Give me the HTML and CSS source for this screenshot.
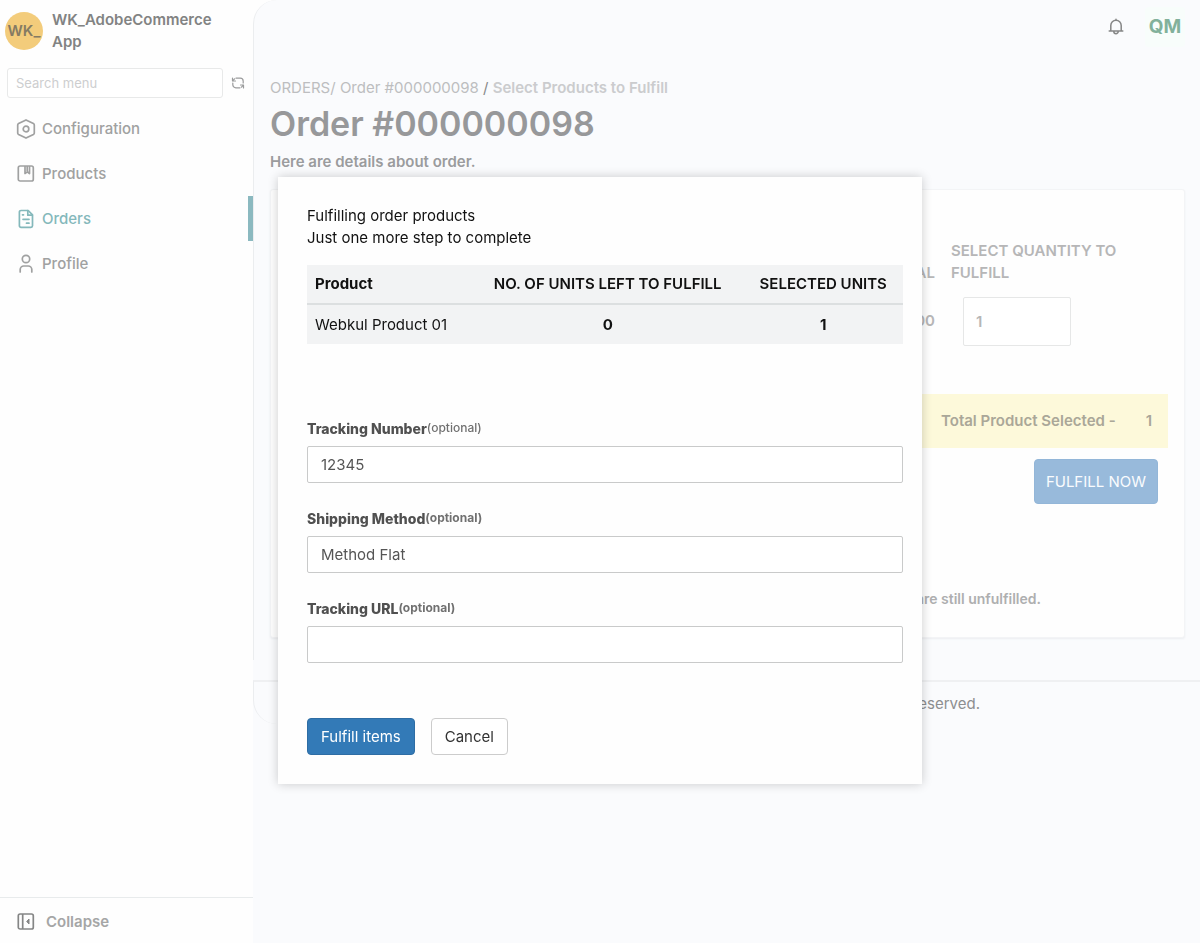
FILE: index.html
```html
<!DOCTYPE html>
<html lang="en">
<head>
  <meta charset="utf-8">
  <title>Order #000000098</title>
  <link rel="stylesheet" href="styles.css">
</head>
<body>
  <div class="layout">
    <aside class="sidebar">
      <div class="brand">
        <div class="brand-logo">WK_</div>
        <div class="brand-name">WK_AdobeCommerce App</div>
      </div>

      <div class="menu-search">
        <input type="text" class="search-input" placeholder="Search menu" aria-label="Search menu">
        <button type="button" class="icon-btn" aria-label="Refresh menu">
          <svg width="14" height="14" viewBox="0 0 14 14" fill="none" stroke="currentColor" stroke-width="1.200" stroke-linecap="round" stroke-linejoin="round"><path d="M1.500 2v3h3M12.500 12V9h-3"/><path d="M5 2.200h4.200a3 3 0 0 1 3 3V7M9 11.800H4.800a3 3 0 0 1-3-3V7M2 4.500l1.500-1.700M12 9.500l-1.500 1.700"/></svg>
        </button>
      </div>

      <nav class="menu">
        <a href="#" class="menu-item">
          <svg width="20" height="20" viewBox="0 0 20 20" fill="none" stroke="currentColor" stroke-width="1.700" stroke-linejoin="round"><path d="M10 .9l7.400 3.700q.9.500.9 1.500v7.800q0 1-.9 1.500L10 19.100l-7.400-3.700q-.9-.5-.9-1.500V6.100q0-1 .9-1.500z"/><circle cx="10" cy="10" r="2.800"/></svg>
          Configuration
        </a>
        <a href="#" class="menu-item">
          <svg width="20" height="20" viewBox="0 0 20 20" fill="none" stroke="currentColor" stroke-width="1.700" stroke-linejoin="round"><rect x="2.300" y="2" width="15" height="15" rx="1.800"/><path d="M9 2v7.500l2.200-1.700 2.300 1.700V2M11.200 2v5"/></svg>
          Products
        </a>
        <a href="#" class="menu-item active">
          <svg width="20" height="20" viewBox="0 0 20 20" fill="none" stroke="currentColor" stroke-width="1.700" stroke-linecap="round" stroke-linejoin="round"><path d="M5 1.500h7.200l4.300 4.300v10.900a1.600 1.600 0 0 1-1.600 1.600H5a1.600 1.600 0 0 1-1.600-1.600V3.100A1.600 1.600 0 0 1 5 1.500z"/><path d="M11.800 1.700v4.500h4.500M6.500 5.800h1M7 10.300h6M10.500 14.200h2.500"/></svg>
          Orders
        </a>
        <a href="#" class="menu-item">
          <svg width="20" height="20" viewBox="0 0 20 20" fill="none" stroke="currentColor" stroke-width="1.700" stroke-linecap="round"><circle cx="10" cy="5" r="3.700"/><path d="M4.200 18v-2.400a3.600 3.600 0 0 1 3.600-3.600h4.400a3.600 3.600 0 0 1 3.600 3.600V18"/></svg>
          Profile
        </a>
      </nav>

      <button type="button" class="collapse-btn">
        <svg width="20" height="20" viewBox="0 0 20 20" fill="none" stroke="currentColor" stroke-width="1.700" stroke-linejoin="round"><rect x="2.300" y="2" width="15" height="15" rx="1.800"/><path d="M6.700 2v15"/><path d="M13 7l-2.300 2.500L13 12z" fill="currentColor" stroke-width="1"/></svg>
        Collapse
      </button>
    </aside>

    <div class="content">
      <main class="page">
        <header class="topbar">
          <button type="button" class="icon-btn bell-btn" aria-label="Notifications">
            <svg width="18" height="18" viewBox="0 0 18 18" fill="none" stroke="currentColor" stroke-width="1.500" stroke-linecap="round" stroke-linejoin="round"><path d="M2.200 13h13.600M3.800 13V7.500a5.200 5.200 0 0 1 10.400 0V13M9 2.300V1.200M6.800 13.500a2.200 2.200 0 0 0 4.400 0"/></svg>
          </button>
          <button type="button" class="avatar">QM</button>
        </header>

        <nav class="breadcrumb">
          <a href="#">ORDERS/</a> <a href="#">Order #000000098</a> <span class="slash">/</span> <b>Select Products to Fulfill</b>
        </nav>
        <h1 class="title">Order #000000098</h1>
        <p class="subtitle">Here are details about order.</p>

        <section class="panel">
          <table class="order-table">
            <thead>
              <tr>
                <th class="col-total">TOTAL</th>
                <th class="col-qty">SELECT QUANTITY TO FULFILL</th>
              </tr>
            </thead>
            <tbody>
              <tr>
                <td class="col-total">$10.00</td>
                <td class="col-qty"><input type="text" class="qty-input" value="1" aria-label="Quantity to fulfill"></td>
              </tr>
            </tbody>
          </table>
          <div class="selected-bar"><span>Total Product Selected -</span><span>1</span></div>
          <button type="button" class="fulfill-btn">FULFILL NOW</button>
          <p class="panel-note">are still unfulfilled.</p>
        </section>
      </main>

      <footer class="footer">All rights reserved.</footer>
    </div>
  </div>

  <div class="modal-wrap">
    <form class="modal" role="dialog" aria-labelledby="modalTitle">
      <div id="modalTitle">Fulfilling order products</div>
      <div>Just one more step to complete</div>

      <table class="units-table">
        <thead>
          <tr>
            <th class="product">Product</th>
            <th>NO. OF UNITS LEFT TO FULFILL</th>
            <th>SELECTED UNITS</th>
          </tr>
        </thead>
        <tbody>
          <tr>
            <td class="product">Webkul Product 01</td>
            <td>0</td>
            <td>1</td>
          </tr>
        </tbody>
      </table>

      <div class="field">
        <label for="trackingNumber">Tracking Number<sup class="light">(optional)</sup></label>
        <input type="text" id="trackingNumber" value="12345">
      </div>
      <div class="field">
        <label for="shippingMethod">Shipping Method<sup>(optional)</sup></label>
        <input type="text" id="shippingMethod" value="Method Flat">
      </div>
      <div class="field">
        <label for="trackingUrl">Tracking URL<sup>(optional)</sup></label>
        <input type="text" id="trackingUrl">
      </div>

      <div class="actions">
        <button type="button" class="btn btn-primary">Fulfill items</button>
        <button type="button" class="btn">Cancel</button>
      </div>
    </form>
  </div>
</body>
</html>
```
FILE: styles.css
```css
* {
  box-sizing: border-box;
}

body {
  margin: 0;
  background: #fafbfd;
  color: #9a9b9c;
  font-family: Inter, sans-serif;
  font-size: 15px;
  line-height: 22px;
}

button,
input {
  font: inherit;
  color: inherit;
}

button {
  cursor: pointer;
}

a {
  color: inherit;
  text-decoration: none;
}

svg {
  display: block;
  flex: none;
}

.layout {
  display: flex;
  min-height: 100vh;
}

/* sidebar */
.sidebar {
  display: flex;
  flex-direction: column;
  flex: none;
  width: 253px;
  background: #fefefe;
}

.brand {
  display: flex;
  gap: 9px;
  padding: 9px 32px 8px 5px;
  color: #828383;
  font-weight: 600;
}

.brand-logo {
  flex: none;
  width: 38px;
  height: 38px;
  margin-top: 3px;
  border-radius: 50%;
  background: #f3cc7b;
  color: #857b63;
  line-height: 38px;
  text-align: center;
}

.menu-search {
  display: flex;
  align-items: center;
  gap: 8px;
  padding: 7px 8px 8px 7px;
}

.search-input {
  flex: 1;
  min-width: 0;
  height: 30px;
  padding: 0 8px;
  border: 1px solid #e8e9e9;
  border-radius: 3px;
  background: #fff;
  font-size: 13px;
}

.search-input::placeholder {
  color: #cdcecf;
}

.icon-btn {
  padding: 0;
  border: 0;
  background: none;
}

.menu-item {
  display: flex;
  align-items: center;
  gap: 6px;
  height: 45px;
  padding-left: 16px;
  border-right: 5px solid transparent;
  color: #a0a1a1;
  font-weight: 500;
}

.menu-item.active {
  border-right-color: #8bb9c0;
  color: #84b8bb;
}

.collapse-btn {
  display: flex;
  align-items: center;
  gap: 10px;
  height: 46px;
  margin-top: auto;
  padding: 2px 16px 0;
  border: 0;
  border-top: 1px solid #e8ebec;
  background: none;
  color: #a5a6a6;
  font-weight: 600;
}

.collapse-btn svg {
  color: #858686;
}

/* page */
.content {
  flex: 1;
  min-width: 0;
  background: linear-gradient(to bottom, #fefefe 24px, #fafbfd 24px);
}

.page {
  min-height: 660px;
  padding: 0 15px 22px 16px;
  border-left: 1px solid #ebedef;
  border-top-left-radius: 24px;
  background: #fafbfd;
}

.topbar {
  display: flex;
  align-items: center;
  justify-content: flex-end;
  gap: 20px;
  height: 54px;
}

.bell-btn {
  color: #858686;
}

.avatar {
  width: 40px;
  height: 40px;
  padding: 0;
  border: 0;
  border-radius: 4px;
  background: #f8fdfb;
  color: #82b19b;
  font-size: 19px;
  font-weight: 700;
}

.breadcrumb {
  margin-top: 23px;
  color: #bdbec0;
}

.breadcrumb .slash {
  color: #88898a;
}

.breadcrumb b {
  color: #cbccce;
  font-weight: 600;
}

.title {
  margin: 0;
  color: #97989a;
  font-size: 34px;
  font-weight: 600;
  line-height: 50px;
}

.subtitle {
  margin: 2px 0 16px;
  color: #9b9c9e;
  font-weight: 600;
}

.panel {
  display: flex;
  flex-direction: column;
  min-height: 449px;
  padding: 50px 16px 27px;
  border: 1px solid #f3f4f6;
  border-radius: 3px;
  background: #fefefe;
  box-shadow: 0 1px 2px #eceef1;
}

.order-table {
  width: 100%;
  border-collapse: collapse;
  color: #b6b6b7;
  text-align: left;
}

.order-table th,
.order-table td {
  padding: 0;
  font-weight: 600;
  vertical-align: bottom;
}

.order-table td {
  height: 74px;
  vertical-align: middle;
}

.order-table .col-total {
  padding-right: 16px;
  text-align: right;
}

.order-table .col-qty {
  width: 217px;
  padding-right: 40px;
}

.order-table td.col-qty {
  padding-left: 12px;
}

.qty-input {
  width: 108px;
  height: 49px;
  padding: 0 12px;
  border: 1px solid #e6e7e7;
  border-radius: 2px;
  background: #fff;
}

.selected-bar {
  display: flex;
  justify-content: flex-end;
  gap: 30px;
  margin-top: 36px;
  padding: 16px;
  background: #fdf9da;
  color: #aaa798;
  font-weight: 600;
}

.fulfill-btn {
  align-self: flex-end;
  height: 45px;
  margin: 11px 10px 0 0;
  padding: 0 11px;
  border: 1px solid #93b6d8;
  border-radius: 4px;
  background: #98badb;
  color: #fafcfe;
}

.panel-note {
  margin: auto 0 0;
  padding-right: 127px;
  color: #aeafb0;
  font-size: 14px;
  font-weight: 600;
  text-align: right;
}

.footer {
  height: 44px;
  margin-top: 20px;
  padding: 11px 220px 0 24px;
  border-top: 2px solid #eff0f2;
  border-left: 1px solid #ebedef;
  border-bottom-left-radius: 24px;
  color: #8d8e90;
  text-align: right;
}

/* modal */
.modal-wrap {
  position: fixed;
  inset: 0;
  display: flex;
  align-items: flex-start;
  justify-content: center;
  padding-top: 177px;
}

.modal {
  width: 100%;
  max-width: 644px;
  padding: 28px 19px 29px 29px;
  background: #fefefe;
  color: #111;
  box-shadow: 0 0 10px rgba(0, 0, 0, 0.2);
}

.units-table {
  width: 100%;
  margin: 16px 0 75px;
  border-collapse: collapse;
  background: #f2f3f4;
  text-align: center;
}

.units-table th,
.units-table td {
  padding: 8px;
  font-weight: 600;
}

.units-table td {
  height: 40px;
  font-weight: 700;
}

.units-table th {
  border-bottom: 2px solid #dcdfe0;
}

.units-table .product {
  font-weight: 700;
  text-align: left;
}

.units-table td.product {
  font-weight: 400;
}

.field {
  display: flex;
  flex-direction: column;
  gap: 7px;
  margin-bottom: 26px;
}

.field label {
  color: #505050;
  font-size: 14px;
  font-weight: 800;
  line-height: 20px;
}

.field sup {
  color: #707070;
  font-size: 12px;
  font-weight: 700;
  line-height: 12px;
  vertical-align: 2px;
}

.field .light {
  font-weight: 500;
}

.field input {
  height: 37px;
  padding: 0 13px;
  border: 1px solid #c9caca;
  border-radius: 2px;
  background: #fff;
  color: #555;
}

.actions {
  display: flex;
  gap: 16px;
  padding-top: 29px;
}

.btn {
  height: 37px;
  padding: 0 13px;
  border: 1px solid #ccc;
  border-radius: 4px;
  background: #fff;
  color: #333;
}

.btn-primary {
  border-color: #2e6da4;
  background: #337ab7;
  color: #fff;
}
```
